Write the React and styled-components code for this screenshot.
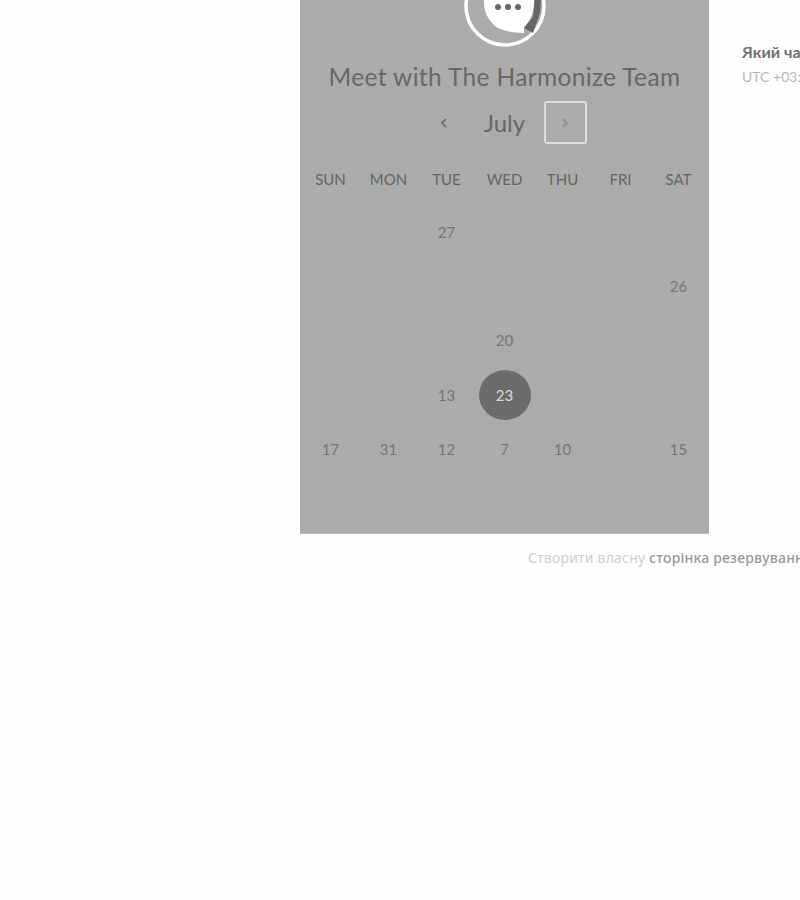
import React from "react";
import styled, { createGlobalStyle } from "styled-components";
import { FaHubspot } from "react-icons/fa";

const days = ["SUN", "MON", "TUE", "WED", "THU", "FRI", "SAT"];

// only the dates that are still readable in the picture, the rest of the month is blank
const weeks = [
  [null, null, "27", null, null, null, null],
  [null, null, null, null, null, null, "26"],
  [null, null, null, "20", null, null, null],
  [null, null, "13", "23", null, null, null],
  ["17", "31", "12", "7", "10", null, "15"],
];

function Logo() {
  return (
    <svg width="82" height="82" viewBox="0 0 82 82">
      <circle cx="41" cy="41" r="39" fill="none" stroke="#fff" strokeWidth="3.5" />
      <path d="M20 38C20 20 32 8 46 8C60 8 70 20 70 36C70 48 66 56 60 62L60 68C50 68 40 66 34 63C26 58 20 48 20 38Z" fill="#fff" />
      <path d="M68 8L78 16L76 48L69 68L60 63L69 52C71 40 71 24 68 8Z" fill="#666" />
      <circle cx="34" cy="42" r="3" fill="#666" />
      <circle cx="44" cy="42" r="3" fill="#666" />
      <circle cx="54" cy="42" r="3" fill="#666" />
    </svg>
  );
}

export default function App() {
  return (
    <>
      <GlobalStyle />
      <Page>
        <Scheduler>
          <Panel>
            <Logo />
            <Title>Meet with The Harmonize Team</Title>
            <MonthNav>
              <NavButton>
                <svg width="8" height="12" viewBox="0 0 8 12">
                  <path d="M6 2L2 6L6 10" fill="none" stroke="#666" strokeWidth="1.6" />
                </svg>
              </NavButton>
              <Month>July</Month>
              <NavButton $focused>
                <svg width="8" height="12" viewBox="0 0 8 12">
                  <path d="M2 2L6 6L2 10" fill="none" stroke="#868686" strokeWidth="1.2" />
                </svg>
              </NavButton>
            </MonthNav>
            <DayRow>
              {days.map((day) => (
                <DayName key={day}>{day}</DayName>
              ))}
            </DayRow>
            <Weeks>
              {weeks.flat().map((date, i) => (
                <DateCell key={i}>
                  {date && <DateNumber $selected={date === "23"}>{date}</DateNumber>}
                </DateCell>
              ))}
            </Weeks>
          </Panel>
          <Footer>
            <FaHubspot size={14} color="#b4b4b4" />
            <FooterText>
              Створити власну <strong>сторінка резервування</strong>
            </FooterText>
          </Footer>
        </Scheduler>
        <Side>
          <SideTitle>Який час вам підходить?</SideTitle>
          <Zone>UTC +03:00</Zone>
        </Side>
      </Page>
    </>
  );
}

const GlobalStyle = createGlobalStyle`
  html, body {
    margin: 0;
    height: 900px;
    overflow: hidden;
    background: #fefefe;
  }
`;

const Page = styled.div`
  display: flex;
  width: 800px;
  height: 900px;
  padding-left: 300px;
  box-sizing: border-box;
  overflow: hidden;
  font-family: Lato, "Noto Sans", sans-serif;
`;

const Scheduler = styled.div`
  flex: none;
  width: 409px;
  margin-top: -35px;
`;

const Panel = styled.div`
  display: flex;
  flex-direction: column;
  align-items: center;
  height: 569px;
  background: #ababab;
  border-bottom: 1px solid #bbb;
  box-sizing: border-box;
`;

const Title = styled.h1`
  margin: 13px 0 0;
  font-size: 24.5px;
  line-height: 34px;
  font-weight: 400;
  letter-spacing: 0.35px;
  color: #686868;
  white-space: nowrap;
`;

const MonthNav = styled.div`
  display: flex;
  align-items: center;
  justify-content: center;
  gap: 18px;
  margin-top: 7px;
`;

const NavButton = styled.div`
  display: flex;
  align-items: center;
  justify-content: center;
  width: 43px;
  height: 43px;
  box-sizing: border-box;
  border-radius: 3px;
  border: 2px solid ${(p) => (p.$focused ? "#dcdcdc" : "transparent")};
`;

const Month = styled.div`
  width: 42px;
  text-align: center;
  font-size: 24px;
  color: #686868;
`;

const DayRow = styled.div`
  display: grid;
  grid-template-columns: repeat(7, 58px);
  margin-top: 25px;
  height: 20px;
`;

const DayName = styled.div`
  text-align: center;
  font-size: 15px;
  line-height: 20px;
  color: #666;
`;

const Weeks = styled.div`
  display: grid;
  grid-template-columns: repeat(7, 58px);
  grid-auto-rows: 54.2px;
  margin-top: 16px;
`;

const DateCell = styled.div`
  display: flex;
  align-items: center;
  justify-content: center;
`;

const DateNumber = styled.span`
  display: flex;
  align-items: center;
  justify-content: center;
  width: 52px;
  height: 50px;
  border-radius: 50%;
  font-size: 15px;
  color: ${(p) => (p.$selected ? "#d8d8d8" : "#777")};
  background: ${(p) => (p.$selected ? "#6c6c6c" : "transparent")};
`;

const Footer = styled.div`
  display: flex;
  align-items: center;
  gap: 4px;
  margin-top: 14px;
  padding-left: 224px;
  white-space: nowrap;
`;

const FooterText = styled.span`
  font-size: 14px;
  color: #cfcfcf;
  font-family: "Noto Sans", sans-serif;
  letter-spacing: 0.2px;

  strong {
    font-weight: 500;
    color: #9a9a9a;
  }
`;

const Side = styled.div`
  flex: none;
  margin-left: 33px;
  margin-top: 40px;
  white-space: nowrap;
`;

const SideTitle = styled.div`
  font-size: 16px;
  line-height: 24px;
  font-weight: 700;
  color: #707070;
`;

const Zone = styled.div`
  font-size: 14px;
  line-height: 20px;
  margin-top: 3px;
  color: #b8b8b8;
`;
